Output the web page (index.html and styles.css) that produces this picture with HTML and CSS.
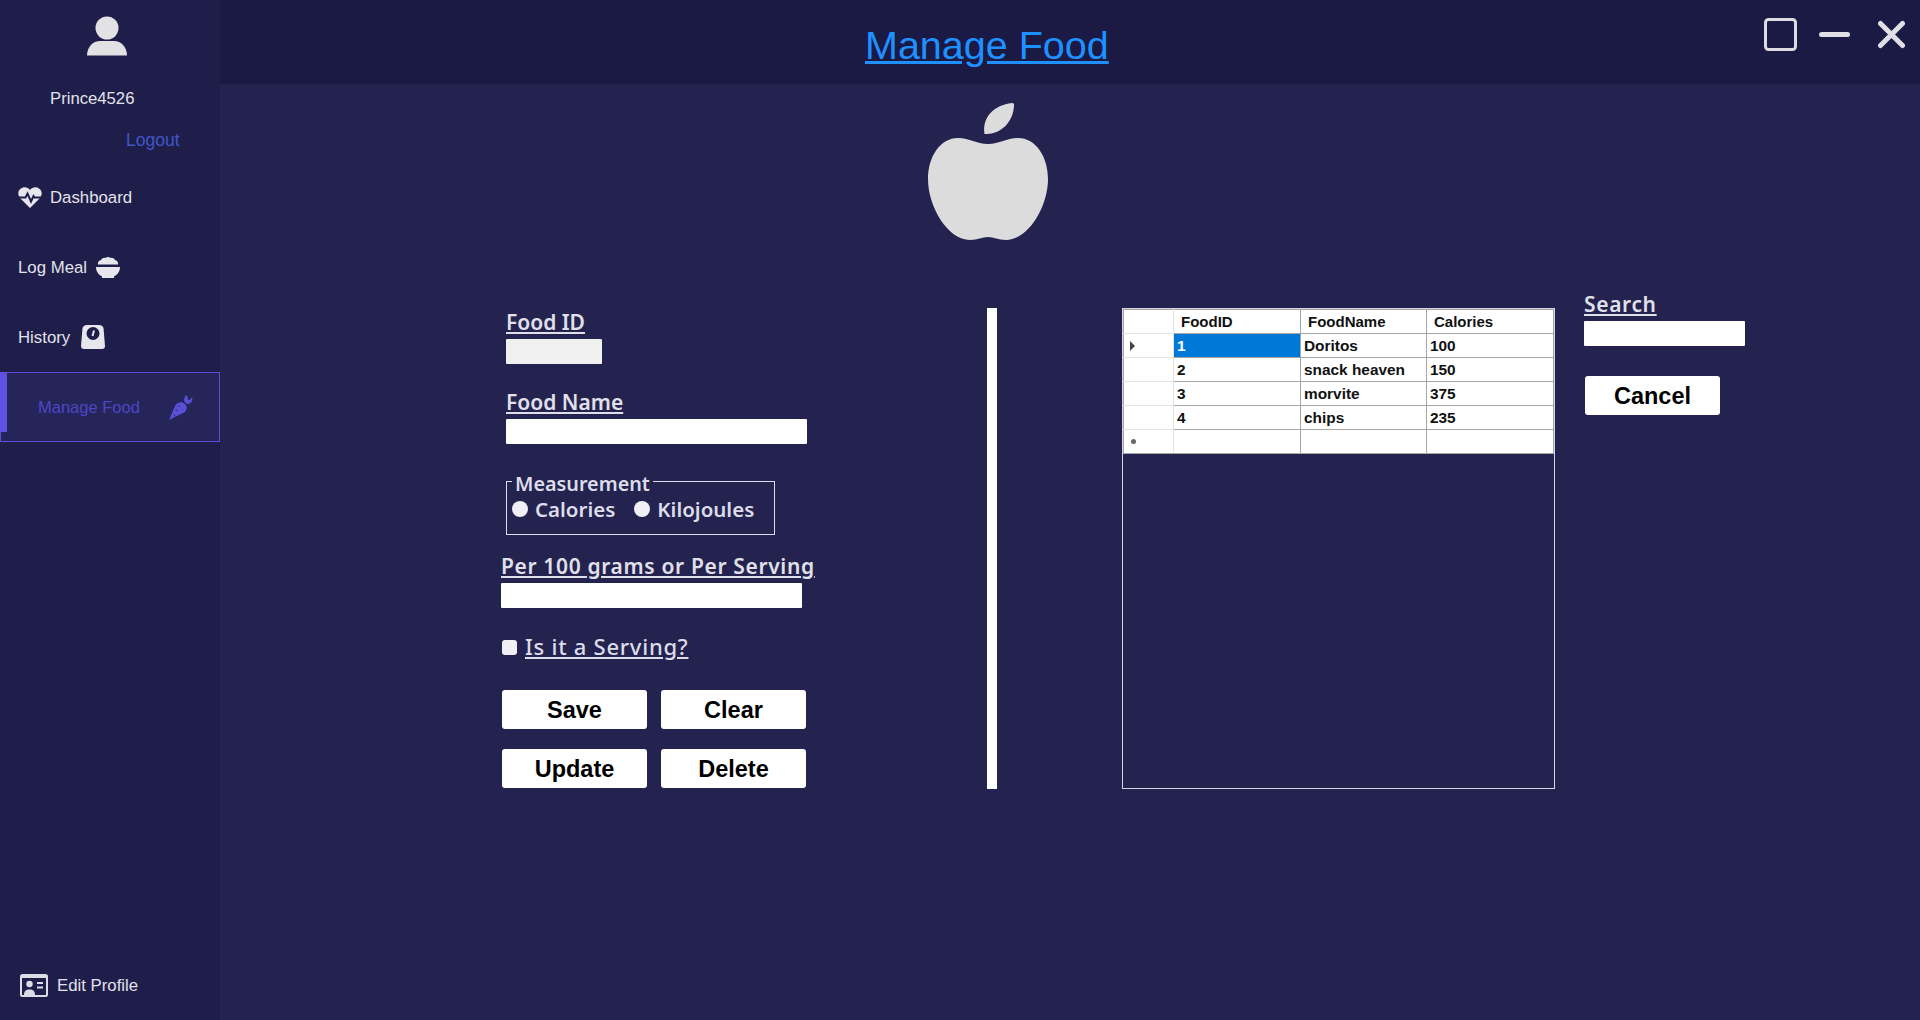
FILE: index.html

```html
<!DOCTYPE html>
<html lang="en">
<head>
    <meta charset="UTF-8">
    <meta name="viewport" content="width=device-width, initial-scale=1.0">
    <title>Manage Food</title>
    <link rel="stylesheet" href="styles.css">
</head>
<body>

<aside class="sidebar">
  <div class="profile">
    <svg class="user-icon" width="40" height="40" viewBox="0 0 40 40">
      <circle cx="20" cy="12" r="11.5" fill="#e2e2e4"/>
      <path d="M0 39.500C0 31 6 25 13 25H27C34 25 40 31 40 39.500Z" fill="#e2e2e4"/>
    </svg>
    <div class="username">Prince4526</div>
    <a class="logout">Logout</a>
  </div>

  <nav class="nav">
    <a class="nav-item">
      <svg width="24" height="21" viewBox="0 0 24 21">
        <path d="M12 21L2 11C-1 7 0 2 5 .5C8 0 10.500 1 12 3C13.500 1 16 0 19 .5C24 2 25 7 22 11Z" fill="#e6e6ec"/>
        <path d="M0 10.500H7.500L9.500 6.500L13 14.500L15.500 9L16.500 10.500H24" fill="none" stroke="#1f1e4a" stroke-width="2"/>
      </svg>
      <span>Dashboard</span>
    </a>
    <a class="nav-item nav-item-meal">
      <span>Log Meal</span>
      <svg width="24" height="21" viewBox="0 0 24 21">
        <path d="M2 7.500C1.500 5 3 3.500 5 3C6 1 8 .5 9.500 1C11 -.3 13 -.3 14.500 1C16 .5 18 1 19 3C21 3.500 22.500 5 22 7.500Z" fill="#e6e6ec"/>
        <path d="M0 10H24C24 15 21 18 18 19.500V21H6V19.500C3 18 0 15 0 10Z" fill="#e6e6ec"/>
      </svg>
    </a>
    <a class="nav-item nav-item-history">
      <span>History</span>
      <svg width="24" height="24" viewBox="0 0 24 24">
        <path d="M6 0H18C20 0 22 1 22.500 3L24 21C24 23 23 24 21 24H3C1 24 0 23 0 21L1.500 3C2 1 4 0 6 0Z" fill="#e6e6ec"/>
        <circle cx="12" cy="8.500" r="6.500" fill="#1f1e4a"/>
        <path d="M11.500 11L13 5.500" stroke="#e6e6ec" stroke-width="2"/>
      </svg>
    </a>
    <a class="nav-item nav-item-active">
      <span>Manage Food</span>
      <svg width="24" height="25" viewBox="0 0 24 25">
        <path d="M0 25L6 11C8 7 13 6 16 9C19 12 18 16 14 18Z" fill="#5a4fd6"/>
        <path d="M15 6C15 3 16 1 18 0L19 5C21 5 22 4 23 2C24 5 23 9 18 9Z" fill="#5a4fd6"/>
        <path d="M6.500 14.500L8.500 16M9.500 10.500L11 12M5 20L6.500 21" stroke="#26255a" stroke-width="1"/>
      </svg>
    </a>
  </nav>

  <a class="nav-item nav-footer">
    <svg width="28" height="23" viewBox="0 0 28 23">
      <rect width="28" height="23" rx="2.500" fill="#dcdce6"/>
      <rect x="2" y="4" width="24" height="17" fill="#1f1e4a"/>
      <circle cx="9.500" cy="10" r="3.200" fill="#dcdce6"/>
      <path d="M4 21C4 17 6 15.500 9.500 15.500C13 15.500 15 17 15 21Z" fill="#dcdce6"/>
      <path d="M17 9H23M17 13.500H23" stroke="#dcdce6" stroke-width="2"/>
    </svg>
    <span>Edit Profile</span>
  </a>
</aside>

<div class="content">
  <header class="topbar">
    <h1 class="page-title">Manage Food</h1>
    <div class="window-buttons">
      <svg width="33" height="33" viewBox="0 0 33 33">
        <rect x="1.500" y="1.500" width="30" height="30" rx="3" fill="none" stroke="#dcdce0" stroke-width="3"/>
      </svg>
      <svg width="31" height="33" viewBox="0 0 31 33">
        <path d="M2.500 16.500H28.500" stroke="#e0e0e4" stroke-width="5" stroke-linecap="round"/>
      </svg>
      <svg width="27" height="33" viewBox="0 0 27 33">
        <path d="M2.500 5.500L24.500 27.500M24.500 5.500L2.500 27.500" stroke="#e0e0e4" stroke-width="5" stroke-linecap="round"/>
      </svg>
    </div>
  </header>

  <div class="apple-wrap">
    <svg width="120" height="138" viewBox="0 0 120 138">
      <path d="M60 41C48 41 42 35 30 35C12 35 0 54 0 76C0 104 20 137 42 137C50 137 54 134 60 134C66 134 70 137 78 137C100 137 120 104 120 76C120 54 108 35 90 35C78 35 72 41 60 41Z" fill="#dcdcdc"/>
      <path d="M56.500 31C54 14 66 2 84 0Q86.500 0 86 3C85 20 72 31 59 31Z" fill="#dcdcdc"/>
    </svg>
  </div>

  <main class="panels">
    <form class="food-form">
      <div class="field field-id">
        <label class="field-label">Food ID</label>
        <input class="text-input input-id" type="text" disabled>
      </div>
      <div class="field field-name">
        <label class="field-label">Food Name</label>
        <input class="text-input" type="text">
      </div>
      <fieldset class="measure">
        <legend>Measurement</legend>
        <label class="radio"><input type="radio" name="measure">Calories</label>
        <label class="radio"><input type="radio" name="measure">Kilojoules</label>
      </fieldset>
      <div class="field field-per">
        <label class="field-label field-label-wide">Per 100 grams or Per Serving</label>
        <input class="text-input" type="text">
      </div>
      <label class="serving"><input type="checkbox"><span>Is it a Serving?</span></label>
      <div class="form-buttons">
        <button class="btn" type="button">Save</button>
        <button class="btn" type="button">Clear</button>
        <button class="btn" type="button">Update</button>
        <button class="btn" type="button">Delete</button>
      </div>
    </form>

    <div class="divider"></div>

    <div class="grid-box">
      <table class="food-table">
        <thead>
          <tr><th class="row-head"></th><th>FoodID</th><th>FoodName</th><th>Calories</th></tr>
        </thead>
        <tbody>
          <tr><td class="row-head"><span class="row-arrow"></span></td><td class="selected">1</td><td>Doritos</td><td>100</td></tr>
          <tr><td class="row-head"></td><td>2</td><td>snack heaven</td><td>150</td></tr>
          <tr><td class="row-head"></td><td>3</td><td>morvite</td><td>375</td></tr>
          <tr><td class="row-head"></td><td>4</td><td>chips</td><td>235</td></tr>
          <tr><td class="row-head"><span class="row-new"></span></td><td></td><td></td><td></td></tr>
        </tbody>
      </table>
    </div>

    <div class="search-col">
      <label class="field-label field-label-wide">Search</label>
      <input class="text-input input-search" type="text">
      <button class="btn btn-cancel" type="button">Cancel</button>
    </div>
  </main>
</div>

</body>
</html>
```

FILE: styles.css

```css
* {
    box-sizing: border-box;
}
body {
    margin: 0;
    height: 1020px;
    overflow: hidden;
    display: flex;
    font-family: "Liberation Sans", Arial, sans-serif;
    background-color: #24234f;
    color: #e2e2ea;
}

/* sidebar */
.sidebar {
    width: 220px;
    display: flex;
    flex-direction: column;
    background-color: #1f1e4a;
}
.profile {
    height: 162px;
    padding-top: 16px;
    font-size: 16.7px;
}
.user-icon {
    display: block;
    margin-left: 87px;
}
.username {
    margin: 33px 0 0 50px;
    line-height: 20px;
}
.logout {
    display: block;
    margin: 21px 0 0 126px;
    line-height: 20px;
    font-size: 17.5px;
    color: #3f55c8;
}
.nav-item {
    height: 70px;
    display: flex;
    align-items: center;
    gap: 8px;
    padding-left: 18px;
    font-size: 16.8px;
    color: #e2e2ea;
}
.nav-item span {
    padding-top: 2px;
}
.nav-item-meal {
    gap: 9px;
}
.nav-item-history {
    gap: 11px;
}
.nav-item-active {
    position: relative;
    gap: 29px;
    padding-left: 37px;
    background-color: #26255a;
    border: 1px solid #5a4fd6;
    color: #4f45c4;
    font-size: 16.5px;
}
.nav-item-active span {
    padding-top: 0;
}
.nav-item-active::before {
    content: "";
    position: absolute;
    left: -1px;
    top: -1px;
    width: 7px;
    height: 60px;
    background-color: #5f52e0;
}
.nav-footer {
    margin-top: auto;
    padding-left: 20px;
    gap: 9px;
}

/* top */
.content {
    flex: 1;
    display: flex;
    flex-direction: column;
}
.topbar {
    height: 84px;
    display: flex;
    background-color: #1b1a45;
}
.page-title {
    margin: 20px 0 0 645px;
    font-size: 39.500px;
    line-height: 50px;
    font-weight: normal;
    text-decoration: underline;
    color: #1e90ff;
}
.window-buttons {
    margin: 18px 15px 0 auto;
    display: flex;
    align-items: flex-start;
    gap: 25px;
}
.window-buttons svg:nth-child(2) {
    margin: 0 3px 0 -3px;
}
.apple-wrap {
    margin: 19px 0 0 708px;
    height: 138px;
}
.apple-wrap svg {
    display: block;
}

/* main panels */
.panels {
    margin-top: 52px;
    padding-left: 281px;
    display: flex;
}
.food-form {
    width: 486px;
    padding-top: 15px;
}
.field-label {
    display: block;
    height: 26px;
    line-height: 26px;
    font-family: "Noto Sans", sans-serif;
    font-size: 21px;
    font-weight: 600;
    text-decoration: underline;
    color: #e0e0ea;
    white-space: nowrap;
}
.field-label-wide {
    letter-spacing: 0.65px;
}
.text-input {
    display: block;
    width: 301px;
    height: 25px;
    margin-top: 3px;
    padding: 0 4px;
    border: 0;
    border-radius: 1px;
    background-color: #fff;
}
.field-id, .field-name {
    margin-left: 5px;
}
.field-id {
    padding-top: 1px;
}
.field-id .text-input {
    margin-top: 4px;
}
.input-id {
    width: 96px;
    background-color: #f0f0f0;
}
.field-name {
    margin-top: 25px;
}
.field-name .text-input {
    margin-top: 4px;
}
.measure {
    display: flex;
    width: 269px;
    height: 64px;
    margin: 27px 0 0 5px;
    padding: 6px 0 0 5px;
    border: 1px solid #dcdcec;
}
.measure legend {
    margin-left: 0;
    padding: 0 3px;
    height: 20px;
    line-height: 26px;
    font-family: "Noto Sans", sans-serif;
    font-size: 19.800px;
    font-weight: 600;
    color: #dcdcea;
}
.radio {
    display: inline-flex;
    align-items: center;
    gap: 7px;
    height: 24px;
    margin-right: 19px;
    font-family: "Noto Sans", sans-serif;
    font-size: 20.500px;
    font-weight: 600;
    color: #dcdcea;
    white-space: nowrap;
}
.radio input, .serving input {
    appearance: none;
    width: 16px;
    height: 16px;
    margin: 0;
    background-color: #f0f0f6;
    border-radius: 50%;
}
.field-per {
    margin-top: 18px;
}
.field-per .text-input {
    margin-top: 4px;
}
.serving {
    display: flex;
    align-items: center;
    gap: 8px;
    margin: 27px 0 0 1px;
    height: 24px;
    font-family: "Noto Sans", sans-serif;
    font-size: 22px;
    font-weight: 500;
    letter-spacing: 0.75px;
    color: #dcdcea;
}
.serving span {
    padding-bottom: 2px;
    text-decoration: underline;
}
.serving input {
    width: 15px;
    height: 15px;
    border-radius: 3px;
}
.form-buttons {
    display: grid;
    grid-template-columns: 145px 145px;
    gap: 20px 14px;
    margin: 31px 0 0 1px;
}
.btn {
    height: 39px;
    padding: 2px 0 0;
    border: 0;
    border-radius: 3px;
    background-color: #fff;
    color: #000;
    font-family: "Liberation Sans", Arial, sans-serif;
    font-size: 23.500px;
    font-weight: bold;
}
.divider {
    width: 10px;
    height: 481px;
    margin-top: 15px;
    background-color: #fff;
}

/* data grid */
.grid-box {
    width: 433px;
    height: 481px;
    margin: 15px 0 0 125px;
    border: 1px solid #d4d4e4;
}
.food-table {
    width: 431px;
    table-layout: fixed;
    border-collapse: collapse;
    background-color: #fff;
    color: #111;
    font-size: 15.400px;
    font-weight: bold;
}
.food-table th, .food-table td {
    height: 24px;
    padding: 0 0 0 3px;
    border: 1px solid #a6a6a6;
    border-width: 0 1px 1px 0;
    text-align: left;
    white-space: nowrap;
    overflow: hidden;
}
.food-table th {
    padding-left: 7px;
    border-top: 1px solid #a6a6a6;
    font-size: 15px;
}
.food-table th:nth-child(1), .food-table .row-head {
    width: 50px;
    padding: 0 0 0 6px;
    border-left: 1px solid #a6a6a6;
    border-bottom-color: #e4e4e4;
    border-right-color: #e4e4e4;
}
.food-table th:nth-child(2) {
    width: 127px;
}
.food-table th:nth-child(3) {
    width: 126px;
}
.food-table tr:last-child td {
    border-bottom-color: #a6a6a6;
}
.food-table .selected {
    padding-left: 3px;
    background-color: #0078d7;
    color: #fff;
}
.row-arrow {
    display: block;
    width: 0;
    height: 0;
    border-left: 5px solid #444;
    border-top: 5px solid transparent;
    border-bottom: 5px solid transparent;
}
.row-new {
    display: block;
    width: 5px;
    height: 5px;
    margin-left: 1px;
    border-radius: 50%;
    background-color: #666;
}

/* search */
.search-col {
    margin-left: 29px;
    margin-top: -2px;
}
.input-search {
    width: 161px;
    margin-top: 4px;
}
.btn-cancel {
    display: block;
    width: 135px;
    margin: 30px 0 0 1px;
}
```
